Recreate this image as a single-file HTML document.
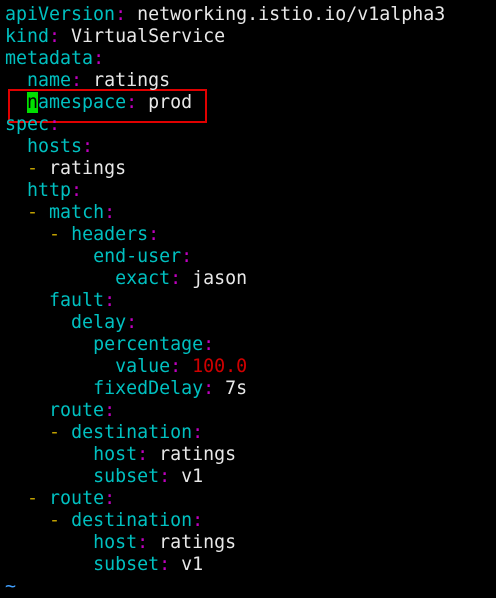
<html><head><style>
body{margin:0;background:#000;width:496px;height:597px;overflow:hidden}
pre{margin:0;position:absolute;left:5px;top:4px;font-family:"DejaVu Sans Mono","Liberation Mono",monospace;font-size:18.3px;line-height:22px;color:#e8e8e8}
.k{color:#00c0c0}.c{color:#c000c0}.d{color:#c0a000}.r{color:#d00000}.t{color:#40a0ff}
.cur{background:#00e000;color:#000}
.box{position:absolute;left:8px;top:89px;width:195px;height:30px;border:2px solid #e00000}
</style></head><body>
<div class="box"></div>
<pre><span class="k">apiVersion</span><span class="c">:</span> networking.istio.io/v1alpha3
<span class="k">kind</span><span class="c">:</span> VirtualService
<span class="k">metadata</span><span class="c">:</span>
  <span class="k">name</span><span class="c">:</span> ratings
  <span class="k"><span class="cur">n</span>amespace</span><span class="c">:</span> prod
<span class="k">spec</span><span class="c">:</span>
  <span class="k">hosts</span><span class="c">:</span>
  <span class="d">-</span> ratings
  <span class="k">http</span><span class="c">:</span>
  <span class="d">-</span> <span class="k">match</span><span class="c">:</span>
    <span class="d">-</span> <span class="k">headers</span><span class="c">:</span>
        <span class="k">end-user</span><span class="c">:</span>
          <span class="k">exact</span><span class="c">:</span> jason
    <span class="k">fault</span><span class="c">:</span>
      <span class="k">delay</span><span class="c">:</span>
        <span class="k">percentage</span><span class="c">:</span>
          <span class="k">value</span><span class="c">:</span> <span class="r">100.0</span>
        <span class="k">fixedDelay</span><span class="c">:</span> 7s
    <span class="k">route</span><span class="c">:</span>
    <span class="d">-</span> <span class="k">destination</span><span class="c">:</span>
        <span class="k">host</span><span class="c">:</span> ratings
        <span class="k">subset</span><span class="c">:</span> v1
  <span class="d">-</span> <span class="k">route</span><span class="c">:</span>
    <span class="d">-</span> <span class="k">destination</span><span class="c">:</span>
        <span class="k">host</span><span class="c">:</span> ratings
        <span class="k">subset</span><span class="c">:</span> v1
<span class="t">~</span></pre>
</body></html>
